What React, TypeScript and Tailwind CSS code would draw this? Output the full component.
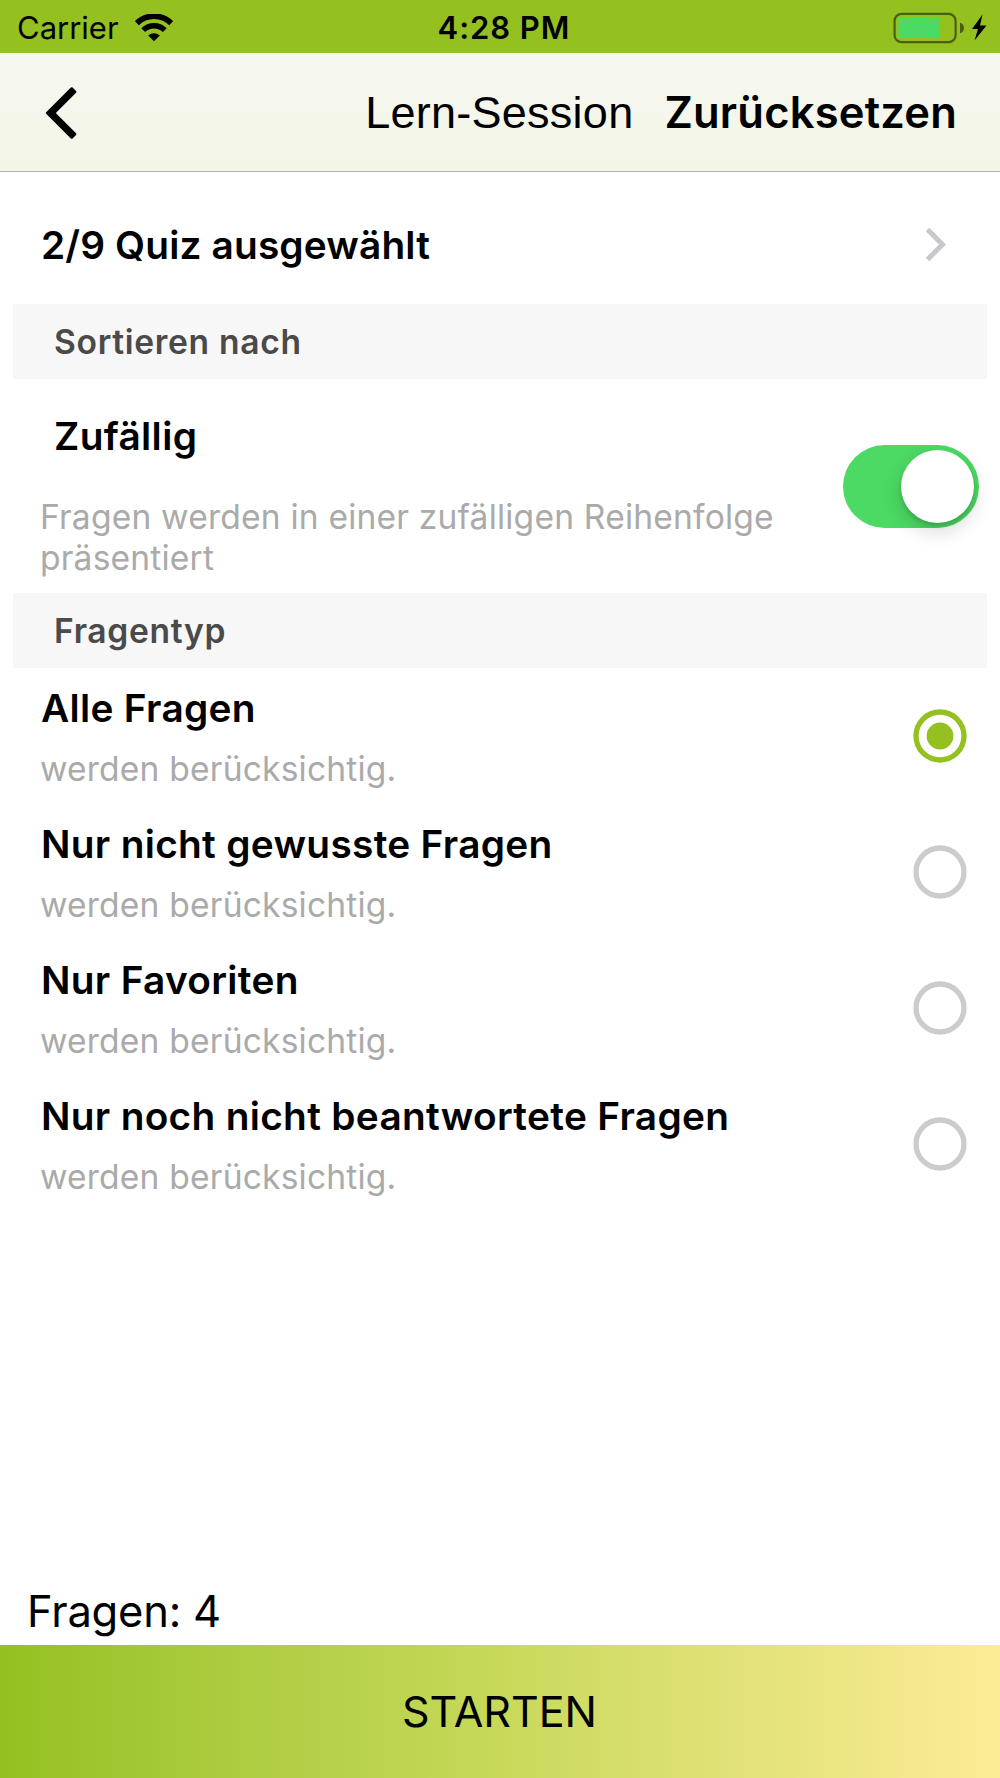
import React, { useState } from "react";

interface QuestionType {
  id: string;
  title: string;
}

const questionTypes: QuestionType[] = [
  { id: "all", title: "Alle Fragen" },
  { id: "unknown", title: "Nur nicht gewusste Fragen" },
  { id: "favorites", title: "Nur Favoriten" },
  { id: "unanswered", title: "Nur noch nicht beantwortete Fragen" },
];

const StatusBar: React.FC = () => (
  <div className="grid h-[53px] shrink-0 grid-cols-3 items-center bg-[#94c120] text-[31px] leading-[54px]">
    <div className="flex items-center pt-px pl-[17px]">
      <span>Carrier</span>
      <svg className="ml-4" width="38" height="28" viewBox="0 0 38 28">
        <path d="M1.8 9.2A24.5 24.5 0 0 1 36.2 9.2" fill="none" stroke="#000" strokeWidth="5.6" />
        <path d="M8.2 16.2A15.2 15.2 0 0 1 29.8 16.2" fill="none" stroke="#000" strokeWidth="5.4" />
        <path d="M13.2 21.5A8.5 8.5 0 0 1 24.8 21.5L19 27.2Z" />
      </svg>
    </div>
    <div className="pt-px pl-2 text-center font-[560] tracking-[0.95px]">4:28 PM</div>
    <div className="flex items-center justify-end pt-px pr-3">
      <svg width="96" height="32" viewBox="0 0 96 32">
        <rect x="2.6" y="1.8" width="61" height="28.4" rx="7" fill="none" stroke="#000" strokeOpacity="0.5" strokeWidth="2.2" />
        <rect x="6.5" y="6" width="40.5" height="20" rx="1" fill="#4cd964" />
        <path d="M68 10.5Q72 12 72 16T68 21.5Z" fillOpacity="0.5" />
        <path d="M90.5 2.5L80 17H86L82.5 28.5L94.5 13.5H88Z" />
      </svg>
    </div>
  </div>
);

const SectionHeader: React.FC<{ title: string }> = ({ title }) => (
  <h2 className="mx-[13px] h-[75px] shrink-0 bg-[#f7f7f7] pl-[41px] text-[33.6px] leading-[75px] font-[560] tracking-[0.68px] text-[#4a4a4a]">
    {title}
  </h2>
);

const Radio: React.FC<{ checked: boolean }> = ({ checked }) => (
  <svg width="54" height="54" viewBox="0 0 54 54">
    <circle cx="27" cy="27" r="24" fill="none" stroke={checked ? "#94c120" : "#cccccc"} strokeWidth="5.3" />
    {checked && <circle cx="27" cy="27" r="13.4" fill="#94c120" />}
  </svg>
);

const App: React.FC = () => {
  const [random, setRandom] = useState(true);
  const [selected, setSelected] = useState("all");

  return (
    <div className="flex h-[1778px] w-[1000px] flex-col bg-white font-['Inter',sans-serif] text-black">
      <StatusBar />

      {/* ================= NAV BAR ================= */}
      <header className="flex h-[119px] shrink-0 items-center border-b border-[#b2b2b2] bg-linear-to-b from-[#f6f7f0] to-[#f3f6e7] pt-px pr-[43px] pl-[43px]">
        <button type="button" aria-label="Zurück">
          <svg width="34" height="56" viewBox="0 0 34 56">
            <path
              d="M28.7 3.4L4 28L28.7 52.6L32.2 49.1L11.2 28L32.2 6.9Z"
              stroke="#000"
              strokeWidth="2.4"
              strokeLinejoin="round"
            />
          </svg>
        </button>
        <h1 className="ml-auto font-['Liberation_Sans',sans-serif] text-[45px] leading-[54px] tracking-[0.25px]">Lern-Session</h1>
        <button type="button" className="ml-[31px] pb-[2px] text-[43.5px] leading-[54px] font-[560] tracking-[0.2px]">
          Zurücksetzen
        </button>
      </header>

      <button type="button" className="flex h-[132px] shrink-0 items-center justify-between pt-[13px] pr-[52px] pl-[41px] text-left">
        <span className="text-[38.8px] leading-12 font-[560] tracking-[0.16px]">2/9 Quiz ausgewählt</span>
        <svg width="24" height="36" viewBox="0 0 24 36">
          <path d="M3.5 2.5L18.5 17.5L3.5 32.5" fill="none" stroke="#c7c7cc" strokeWidth="5" />
        </svg>
      </button>

      {/* ================= SORTING ================= */}
      <SectionHeader title="Sortieren nach" />
      <div className="flex h-[214px] shrink-0 justify-between pt-[33px] pr-[21px] pl-[40px]">
        <div>
          <h3 className="pl-[14px] text-[38.8px] leading-12 font-[560] tracking-[0.35px]">Zufällig</h3>
          <p className="mt-9 text-[33.6px] leading-[41px] tracking-[0.19px] text-[#aaaaaa]">
            Fragen werden in einer zufälligen Reihenfolge
            <br />
            präsentiert
          </p>
        </div>
        <button
          type="button"
          role="switch"
          aria-checked={random}
          onClick={() => setRandom(!random)}
          className={`mt-[33px] flex h-[83px] w-[136px] items-center rounded-full px-[5px] ${
            random ? "justify-end bg-[#4cd964]" : "justify-start bg-[#e5e5e5]"
          }`}
        >
          <span className="size-[73px] rounded-full bg-white shadow-[0_8px_20px_rgba(0,0,0,0.16),0_3px_4px_rgba(0,0,0,0.14)]" />
        </button>
      </div>

      {/* ================= QUESTION TYPE ================= */}
      <SectionHeader title="Fragentyp" />
      {questionTypes.map((q) => (
        <button
          key={q.id}
          type="button"
          onClick={() => setSelected(q.id)}
          className="flex h-[136px] shrink-0 items-center justify-between pr-[33px] pl-[40px] text-left"
        >
          <span className="flex flex-col gap-4">
            <span className="pl-px text-[38.8px] leading-12 font-[560] tracking-[0.31px]">{q.title}</span>
            <span className="text-[33.6px] leading-[41px] tracking-[0.19px] text-[#aaaaaa]">werden berücksichtig.</span>
          </span>
          <Radio checked={selected === q.id} />
        </button>
      ))}

      {/* ================= FOOTER ================= */}
      <p className="mt-auto pb-[7px] pl-[27px] text-[43.5px] leading-[54px] font-[380] tracking-[-0.2px]">Fragen: 4</p>
      <button
        type="button"
        className="h-[133px] shrink-0 bg-linear-to-r from-[#94c120] via-[#c8d95a] to-[#fdec96] pr-px pb-[2px] text-[43px] leading-[54px] font-[380]"
      >
        STARTEN
      </button>
    </div>
  );
};

export default App;
